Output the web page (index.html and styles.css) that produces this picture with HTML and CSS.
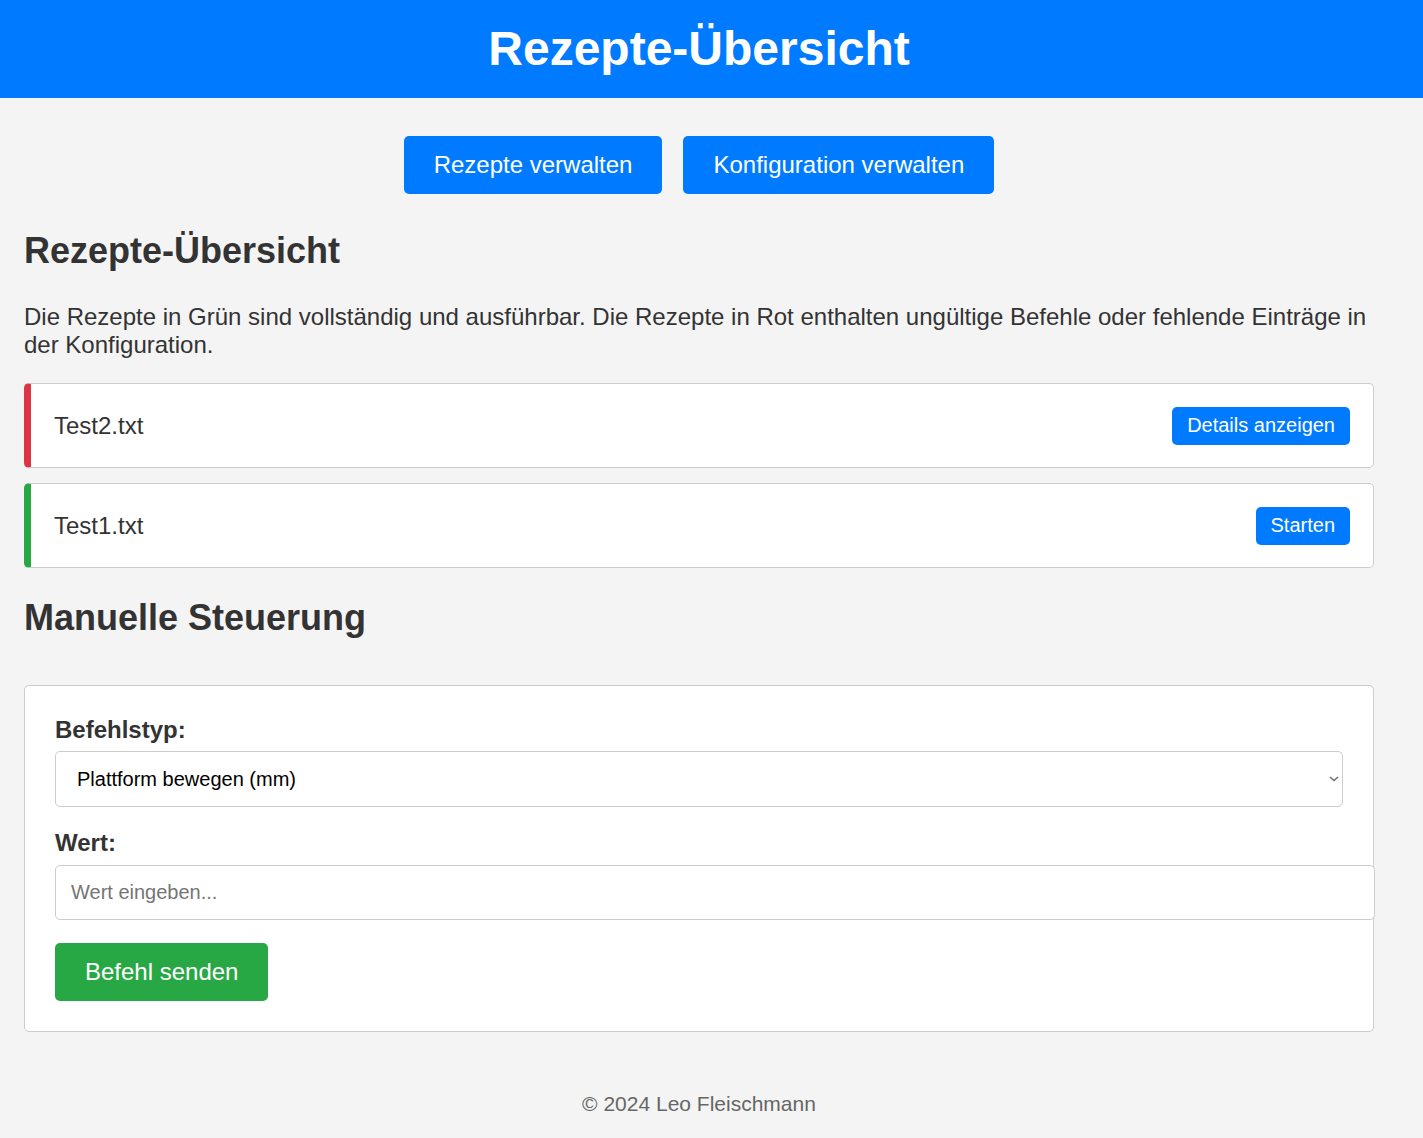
FILE: index.html
```html
<!DOCTYPE html>
<html lang="de">
<head>
<meta charset="utf-8">
<title>Rezepte-Übersicht</title>
<link rel="stylesheet" href="styles.css">
</head>
<body>
<header class="site-header">
  <h1 class="site-title">Rezepte-Übersicht</h1>
</header>
<main class="content">
  <nav class="nav-buttons">
    <button class="btn btn-primary btn-large">Rezepte verwalten</button>
    <button class="btn btn-primary btn-large">Konfiguration verwalten</button>
  </nav>
  <h2 class="section-title first">Rezepte-Übersicht</h2>
  <p class="intro">Die Rezepte in Grün sind vollständig und ausführbar. Die Rezepte in Rot enthalten ungültige Befehle oder fehlende Einträge in der Konfiguration.</p>
  <div class="recipe-list">
    <div class="recipe invalid">
      <span class="recipe-name">Test2.txt</span>
      <button class="btn btn-primary btn-small">Details anzeigen</button>
    </div>
    <div class="recipe valid">
      <span class="recipe-name">Test1.txt</span>
      <button class="btn btn-primary btn-small">Starten</button>
    </div>
  </div>
  <h2 class="section-title second">Manuelle Steuerung</h2>
  <form class="control-card" onsubmit="return false;">
    <label class="field-label" for="cmd">Befehlstyp:</label>
    <div class="select-wrap">
      <select id="cmd" class="field-select">
        <option>Plattform bewegen (mm)</option>
      </select>
      <svg class="select-arrow" width="10" height="6" viewBox="0 0 10 6" aria-hidden="true"><path d="M1 1l4 3.5L9 1" fill="none" stroke="#6b6b6b" stroke-width="1.4"/></svg>
    </div>
    <label class="field-label" for="val">Wert:</label>
    <input id="val" class="field-input" type="text" placeholder="Wert eingeben...">
    <button class="btn btn-success btn-large" type="submit">Befehl senden</button>
  </form>
</main>
<footer class="site-footer">
  <p class="footer-text">© 2024 Leo Fleischmann</p>
</footer>
</body>
</html>
```

FILE: styles.css
```css
* {
  box-sizing: border-box;
}

body {
  margin: 0;
  background: #f4f4f4;
  color: #333;
  font-family: "Liberation Sans", Arial, sans-serif;
  font-size: 24px;
}

.site-header {
  background: #007bff;
  color: #fff;
  padding: 21px 25px 22px 0;
  text-align: center;
}

.site-title {
  margin: 0;
  font-size: 48px;
  font-weight: bold;
  line-height: 55px;
}

.content {
  width: 1398px;
  padding: 0 24px;
}

.nav-buttons {
  display: flex;
  justify-content: center;
  gap: 21px;
  margin-top: 38px;
}

.btn {
  font-family: "Liberation Sans", Arial, sans-serif;
  color: #fff;
  border: none;
  border-radius: 5px;
  cursor: pointer;
}

.btn-primary {
  background: #007bff;
}

.btn-success {
  background: #28a745;
}

.btn-large {
  font-size: 24px;
  line-height: 28px;
  padding: 15px 30px;
}

.btn-small {
  font-size: 20px;
  line-height: 23px;
  padding: 7.5px 15px;
}

.section-title {
  font-size: 36px;
  font-weight: bold;
  line-height: 41px;
  margin: 0;
}

.section-title.first {
  margin-top: 36px;
}

.section-title.second {
  margin-top: 29px;
  margin-bottom: 47px;
}

.intro {
  line-height: 28px;
  margin: 32px 0 24px;
}

.recipe-list {
  display: flex;
  flex-direction: column;
  gap: 15px;
}

.recipe {
  display: flex;
  align-items: center;
  justify-content: space-between;
  background: #fff;
  border: 1px solid #ccc;
  border-left-width: 7px;
  border-radius: 5px;
  padding: 22.5px 23px;
}

.recipe.invalid {
  border-left-color: #dc3545;
}

.recipe.valid {
  border-left-color: #28a745;
}

.recipe-name {
  font-size: 24px;
  line-height: 28px;
}

.control-card {
  background: #fff;
  border: 1px solid #ccc;
  border-radius: 5px;
  padding: 30px;
  margin: 0;
}

.field-label {
  display: block;
  font-weight: bold;
  font-size: 24px;
  line-height: 28px;
  margin-bottom: 7px;
}

.select-wrap {
  position: relative;
  margin-bottom: 22px;
}

.field-select {
  display: block;
  width: 100%;
  height: 56px;
  padding: 0 24px 0 21px;
  -webkit-appearance: none;
  appearance: none;
  font-family: "Liberation Sans", Arial, sans-serif;
  font-size: 20px;
  color: #000;
  background: #fff;
  border: 1px solid #ccc;
  border-radius: 5px;
}

.select-arrow {
  position: absolute;
  right: 4px;
  top: 25px;
  pointer-events: none;
}

.field-input {
  display: block;
  box-sizing: content-box;
  width: 100%;
  padding: 15px;
  height: 23px;
  font-family: "Liberation Sans", Arial, sans-serif;
  font-size: 20px;
  color: #000;
  background: #fff;
  border: 1px solid #ccc;
  border-radius: 5px;
  margin: 8px 0 23px;
}

.field-input::placeholder {
  color: #757575;
}

.site-footer {
  width: 1398px;
  text-align: center;
  padding: 60px 0 22px;
}

.footer-text {
  margin: 0;
  font-size: 21px;
  line-height: 24px;
  color: #666;
}
```
